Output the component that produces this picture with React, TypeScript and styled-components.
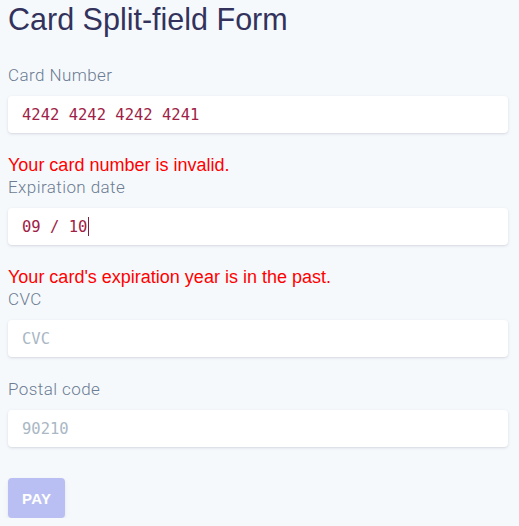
import React from 'react'
import styled, { createGlobalStyle } from 'styled-components'

const GlobalStyle = createGlobalStyle`
  html, body {
    margin: 0;
    padding: 0;
    background: #f6f9fc;
  }
  body {
    font-family: 'Liberation Sans', Arial, Helvetica, sans-serif;
  }
`

interface FieldProps {
  label: string
  value?: string
  placeholder?: string
  error?: string
  focused?: boolean
}

const Field: React.FC<FieldProps> = ({ label, value, placeholder, error, focused }) => {
  return (
    <FieldStyled>
      <Label>{label}</Label>
      <InputBox>
        {value ? (
          <Value>
            {value}
            {focused && <Caret />}
          </Value>
        ) : (
          <Placeholder>{placeholder}</Placeholder>
        )}
      </InputBox>
      {error && <ErrorText>{error}</ErrorText>}
    </FieldStyled>
  )
}

const App: React.FC = () => {
  return (
    <Page>
      <GlobalStyle />
      <Title>Card Split-field Form</Title>
      <Form>
        <Field label="Card Number" value="4242 4242 4242 4241" error="Your card number is invalid." />
        <Field label="Expiration date" value="09 / 10" error="Your card's expiration year is in the past." focused />
        <Field label="CVC" placeholder="CVC" />
        <Field label="Postal code" placeholder="90210" />
        <PayButton disabled>Pay</PayButton>
      </Form>
    </Page>
  )
}

const Page = styled.div`
  padding: 0 8px;
  width: 500px;
`

const Title = styled.h1`
  margin: 0;
  padding-top: 1px;
  height: 63px;
  color: #32325d;
  font-size: 30.5px;
  font-weight: 400;
  line-height: 36px;
`

const Form = styled.div`
  display: flex;
  flex-direction: column;
  align-items: flex-start;
`

const FieldStyled = styled.div`
  display: flex;
  flex-direction: column;
  width: 100%;
  margin-bottom: 21px;
`

const Label = styled.div`
  color: #6b7c93;
  font-family: Roboto, 'Liberation Sans', sans-serif;
  font-size: 17px;
  font-weight: 300;
  letter-spacing: 0.025em;
  line-height: 22px;
`

const InputBox = styled.div`
  margin-top: 10px;
  height: 37px;
  padding: 0 14px;
  display: flex;
  align-items: center;
  background: #fff;
  border-radius: 4px;
  box-shadow: rgba(50, 50, 93, 0.15) 0px 1px 3px, rgba(0, 0, 0, 0.02) 0px 1px 0px;
  font-family: 'DejaVu Sans Mono', 'Liberation Mono', monospace;
  font-size: 15.5px;
`

const Value = styled.span`
  color: #9e2146;
  display: flex;
  align-items: center;
`

const Caret = styled.span`
  display: inline-block;
  width: 1px;
  height: 19px;
  margin-left: 1px;
  background: #7a1f3d;
`

const Placeholder = styled.span`
  color: #aab7c4;
`

const ErrorText = styled.div`
  margin-top: 21px;
  margin-bottom: -21px;
  color: #ff0000;
  font-size: 18px;
  line-height: 22px;
`

const PayButton = styled.button`
  margin-top: 10px;
  height: 40px;
  padding: 0 14px;
  border: 0;
  outline: 0;
  border-radius: 4px;
  background: #b9bff2;
  box-shadow: 0 4px 6px rgba(50, 50, 93, 0.06), 0 1px 3px rgba(0, 0, 0, 0.05);
  color: #fff;
  font-family: 'Liberation Sans', Arial, sans-serif;
  font-size: 15px;
  font-weight: 700;
  text-transform: uppercase;
  letter-spacing: 0.025em;
`

export default App
